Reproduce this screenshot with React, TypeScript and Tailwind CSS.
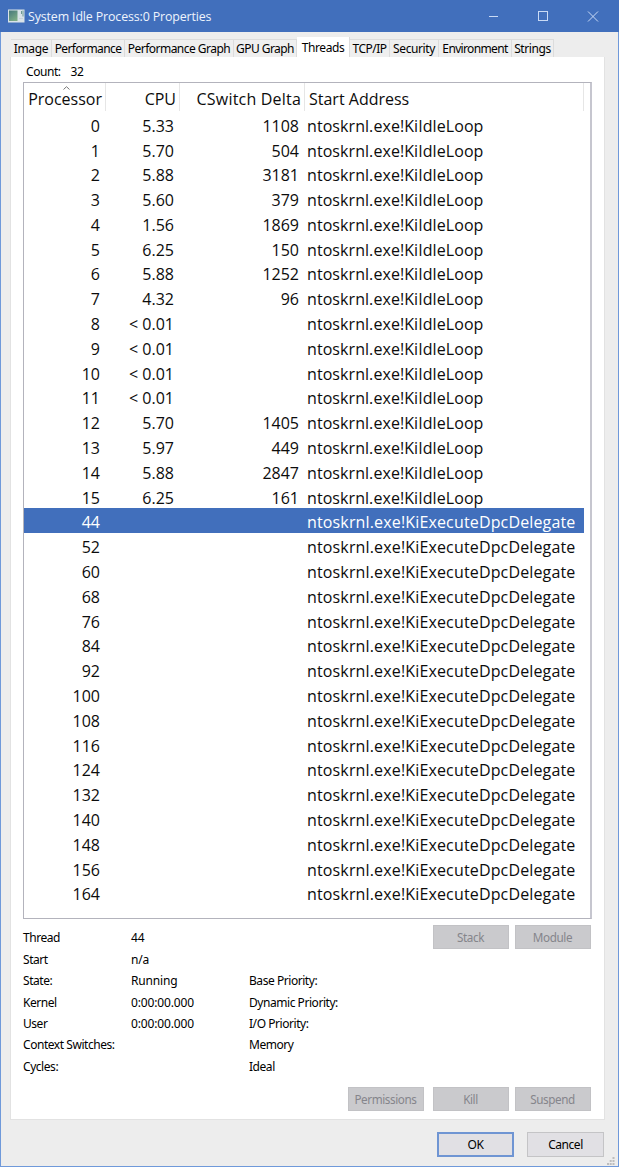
import type { ReactNode } from "react";

type Thread = { cpu: string; delta: string; id: number };

const idle: Thread[] = [
  ["5.33", "1108"],
  ["5.70", "504"],
  ["5.88", "3181"],
  ["5.60", "379"],
  ["1.56", "1869"],
  ["6.25", "150"],
  ["5.88", "1252"],
  ["4.32", "96"],
  ["< 0.01", ""],
  ["< 0.01", ""],
  ["< 0.01", ""],
  ["< 0.01", ""],
  ["5.70", "1405"],
  ["5.97", "449"],
  ["5.88", "2847"],
  ["6.25", "161"],
].map(([cpu, delta], id) => ({ id, cpu, delta }));

const delegates = [44, 52, 60, 68, 76, 84, 92, 100, 108, 116, 124, 132, 140, 148, 156, 164];

const tabs = [
  { label: "Image", box: "w-[41px]", text: "tracking-[-0.3px]" },
  { label: "Performance", box: "w-[73px]", text: "tracking-[-0.6px]" },
  { label: "Performance Graph", box: "w-[109px]", text: "tracking-[-0.52px]" },
  { label: "GPU Graph", box: "w-[63px]", text: "tracking-[-0.55px]" },
  { label: "Threads", box: "w-[53px]", text: "tracking-[-0.4px]", active: true },
  { label: "TCP/IP", box: "w-[40px]", text: "tracking-[-0.5px]" },
  { label: "Security", box: "w-[49px]", text: "tracking-[-0.4px]" },
  { label: "Environment", box: "w-[73px]", text: "tracking-[-0.65px]" },
  { label: "Strings", box: "w-[42px]", text: "tracking-[-0.4px]" },
];

const details = [
  ["Thread", "44", ""],
  ["Start", "n/a", ""],
  ["State:", "Running", "Base Priority:"],
  ["Kernel", "0:00:00.000", "Dynamic Priority:"],
  ["User", "0:00:00.000", "I/O Priority:"],
  ["Context Switches:", "", "Memory"],
  ["Cycles:", "", "Ideal"],
];

function DisabledButton({ children }: { children: ReactNode }) {
  return (
    <button
      className="h-6 w-19 border border-[#c2c2c5] bg-[#cacacd] text-[11.7px] tracking-[-0.4px] text-[#85858b]"
      disabled
    >
      {children}
    </button>
  );
}

function TitleBar() {
  return (
    <header className="flex h-8 shrink-0 items-center bg-[#416fbc] pl-2">
      <svg width="17" height="14" viewBox="0 0 17 14" className="shrink-0">
        <defs>
          <linearGradient id="screen" x1="0" y1="0" x2="0.6" y2="1">
            <stop offset="0" stopColor="#46787c" />
            <stop offset="1" stopColor="#7cab86" />
          </linearGradient>
        </defs>
        <rect x="0" y="0.5" width="16.5" height="13" fill="#d9e3e8" />
        <rect x="1" y="1.5" width="8.5" height="10.5" fill="url(#screen)" />
        <path d="M13.5 2v3M15 1.5v6" stroke="#6d9a94" strokeWidth="1" />
        <path d="M11 9.5h4" stroke="#c3ced4" strokeWidth="0.8" />
      </svg>
      <h1 className="ml-[3px] mt-px grow font-['Open_Sans',sans-serif] text-[12.4px] leading-4 tracking-[-0.13px] text-[#eef4fd]">
        System Idle Process:0 Properties
      </h1>
      <svg width="130" height="32" viewBox="0 0 130 32" fill="none" stroke="#c9daf5" strokeWidth="1" className="shrink-0">
        <path d="M0 16.5h9" />
        <rect x="49.5" y="11.5" width="9" height="9" />
        <path d="M99 11.5l10 10M109 11.5l-10 10" />
      </svg>
    </header>
  );
}

function Row({ id, cpu, delta, address, selected }: Thread & { address: string; selected?: boolean }) {
  return (
    <div
      className={`mr-1.5 flex h-[24.8px] shrink-0 items-center whitespace-nowrap pt-1 ${
        selected ? "bg-[#416fbc] text-white" : "text-[#0c0c0c]"
      }`}
    >
      <span className="w-19 text-right">{id}</span>
      <span className="w-[74px] text-right">{cpu}</span>
      <span className="w-[125px] text-right">{delta}</span>
      <span className={`ml-2 ${delta || cpu ? "tracking-[0.07px]" : "tracking-[0.15px]"}`}>{address}</span>
    </div>
  );
}

function ThreadList() {
  return (
    <div className="flex h-[837px] w-[569px] flex-col border border-[#b3b3bc] border-r-2 border-r-[#c6c6cf] bg-white font-['Open_Sans',sans-serif] text-base leading-6">
      <div className="mr-1.5 flex h-[28.3px] shrink-0 items-start whitespace-nowrap text-[#0c0c0c]">
        <div className="relative h-[28px] w-[82px] border-r border-[#e6e6e6] pt-1 pr-[3px] text-right">
          <span>Processor</span>
          <svg width="7" height="4" viewBox="0 0 7 4" fill="none" stroke="#777" className="absolute top-[3px] left-[39px]">
            <path d="M0.5 3.5L3.5 0.7L6.5 3.5" />
          </svg>
        </div>
        <div className="h-[28px] w-[74px] border-r border-[#e6e6e6] pt-1 pr-[3px] text-right">CPU</div>
        <div className="h-[28px] w-[125px] border-r border-[#e6e6e6] pt-1 pr-[3px] text-right tracking-[0.2px]">
          CSwitch Delta
        </div>
        <div className="h-[28px] grow border-r border-[#e6e6e6] pt-1 pl-1">Start Address</div>
      </div>
      {idle.map((t) => (
        <Row key={t.id} {...t} address="ntoskrnl.exe!KiIdleLoop" />
      ))}
      {delegates.map((id) => (
        <Row key={id} id={id} cpu="" delta="" address="ntoskrnl.exe!KiExecuteDpcDelegate" selected={id === 44} />
      ))}
    </div>
  );
}

export default function App() {
  return (
    <div className="flex h-[1167px] w-[619px] flex-col overflow-hidden bg-[#6f99da] font-['Noto_Sans','Segoe_UI',sans-serif] text-xs leading-4 tracking-[-0.45px] text-black">
      <TitleBar />
      <main className="mx-px mb-px flex grow flex-col bg-[#ededed]">
        <nav className="ml-2.5 flex h-[25px] shrink-0 items-end">
          {tabs.map((t) => (
            <div
              key={t.label}
              className={`flex shrink-0 justify-center whitespace-nowrap border-r border-[#dcdcdc] ${t.box} ${
                t.active ? "h-5 bg-white pt-[3px]" : "h-[18px] border-t bg-[#efefef] pt-px"
              }`}
            >
              <span className={t.text}>{t.label}</span>
            </div>
          ))}
        </nav>
        <section className="ml-[9px] flex h-[1063px] w-[595px] shrink-0 flex-col border border-t-0 border-[#e2e2e2] bg-white pl-3">
          <div className="flex h-[25px] shrink-0 gap-2.5 pt-[7px] pl-[3px]">
            <span>Count:</span>
            <span>32</span>
          </div>
          <div className="flex tracking-normal">
            <ThreadList />
          </div>
          <div className="flex grow justify-between pr-[13.5px]">
            <div className="mt-[8.7px] grid h-[150px] grid-cols-[108px_118px_110px] grid-rows-[repeat(7,21.4px)] items-center whitespace-nowrap">
              {details.flat().map((text, i) => (
                <span key={i} className={i % 3 === 1 ? "tracking-[-0.15px]" : ""}>
                  {text}
                </span>
              ))}
            </div>
            <div className="-ml-4 mt-1.5 flex h-[186px] flex-col items-end justify-between">
              <div className="flex gap-1.5">
                <DisabledButton>Stack</DisabledButton>
                <DisabledButton>Module</DisabledButton>
              </div>
              <div className="-ml-20 flex gap-1.5">
                <div className="mr-[3px]">
                  <DisabledButton>Permissions</DisabledButton>
                </div>
                <DisabledButton>Kill</DisabledButton>
                <DisabledButton>Suspend</DisabledButton>
              </div>
            </div>
          </div>
        </section>
        <footer className="flex grow items-start justify-end">
          <div className="flex gap-[13px] pt-3">
            <button className="h-[25px] w-[77px] border-2 border-[#6f95d3] bg-[#e1e0e4]">OK</button>
            <button className="h-[25px] w-[77px] border border-[#c4c4c6] bg-[#e1e0e4]">Cancel</button>
          </div>
          <svg width="8" height="8" viewBox="0 0 8 8" fill="#bdbdbd" className="mx-[3px] mt-[37px]">
            <path d="M5.5 0h2v2h-2zM2.7 3h2v2h-2zM5.5 3h2v2h-2zM0 6h2v2H0zM2.7 6h2v2h-2zM5.5 6h2v2h-2z" />
          </svg>
        </footer>
      </main>
    </div>
  );
}
